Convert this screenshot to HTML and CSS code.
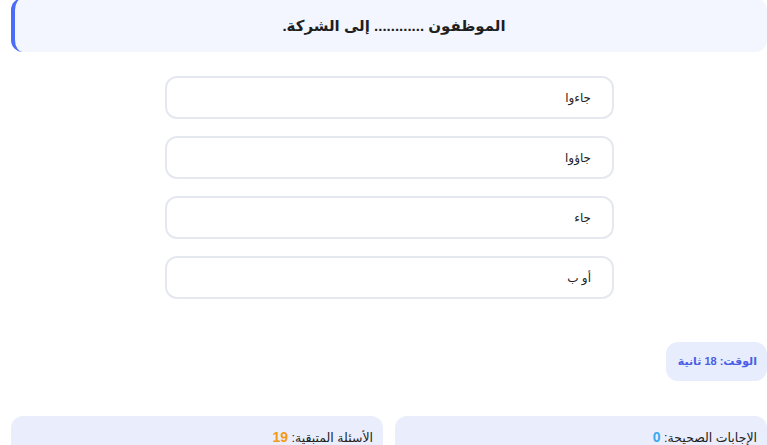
FILE: index.html
```html
<!DOCTYPE html>
<html lang="ar" dir="rtl">
<head>
<meta charset="utf-8">
<link rel="stylesheet" href="styles.css">
</head>
<body>
<div class="page">
  <div class="question">الموظفون ............ إلى الشركة.</div>
  <div class="options">
    <button class="option">جاءوا</button>
    <button class="option">جاؤوا</button>
    <button class="option">جاء</button>
    <button class="option">أو ب</button>
  </div>
  <div class="timer-row">
    <div class="timer">الوقت: 18 ثانية</div>
  </div>
  <div class="stats">
    <div class="stat">الإجابات الصحيحة: <span class="num correct">0</span></div>
    <div class="stat">الأسئلة المتبقية: <span class="num remaining">19</span></div>
  </div>
</div>
</body>
</html>
```
FILE: styles.css
```css
html, body {
  margin: 0;
  padding: 0;
  background: #ffffff;
}
body {
  font-family: "Liberation Sans", Arial, "DejaVu Sans", sans-serif;
  color: #222;
  overflow: hidden;
}
.page {
  width: 756px;
  margin-left: 10px;
  display: flex;
  flex-direction: column;
}
.question {
  margin-top: -2px;
  height: 54px;
  box-sizing: border-box;
  background: #f3f6fe;
  border-left: 4px solid #4a6cf7;
  border-radius: 12px;
  display: flex;
  align-items: center;
  justify-content: center;
  font-size: 15px;
  font-weight: bold;
  color: #1f1f1f;
  padding-top: 2px;
  padding-left: 6px;
}
.options {
  margin-top: 24px;
  display: flex;
  flex-direction: column;
  gap: 17px;
  align-items: center;
}
.option {
  width: 449px;
  height: 43px;
  margin-left: 1px;
  box-sizing: border-box;
  background: #fff;
  border: 2px solid #e5e9ef;
  border-radius: 12px;
  font-family: inherit;
  font-size: 12px;
  color: #222;
  text-align: right;
  padding: 0 21px;
  direction: rtl;
}
.timer-row {
  margin-top: 43px;
  display: flex;
}
.timer {
  background: #e8edfd;
  border-radius: 12px;
  height: 39px;
  box-sizing: border-box;
  padding: 0 10px 0 12px;
  display: flex;
  align-items: center;
  font-size: 11px;
  font-weight: bold;
  color: #4a5de6;
}
.stats {
  margin-top: 35px;
  display: grid;
  grid-template-columns: 1fr 1fr;
  gap: 12px;
}
.stat {
  background: #eaedfb;
  border-radius: 12px;
  height: 60px;
  padding: 13px 10px 0;
  box-sizing: border-box;
  font-size: 12.5px;
  color: #222;
}
.num {
  font-weight: bold;
  font-size: 14px;
}
.correct { color: #3aa8f0; }
.remaining { color: #f39a16; }
```
